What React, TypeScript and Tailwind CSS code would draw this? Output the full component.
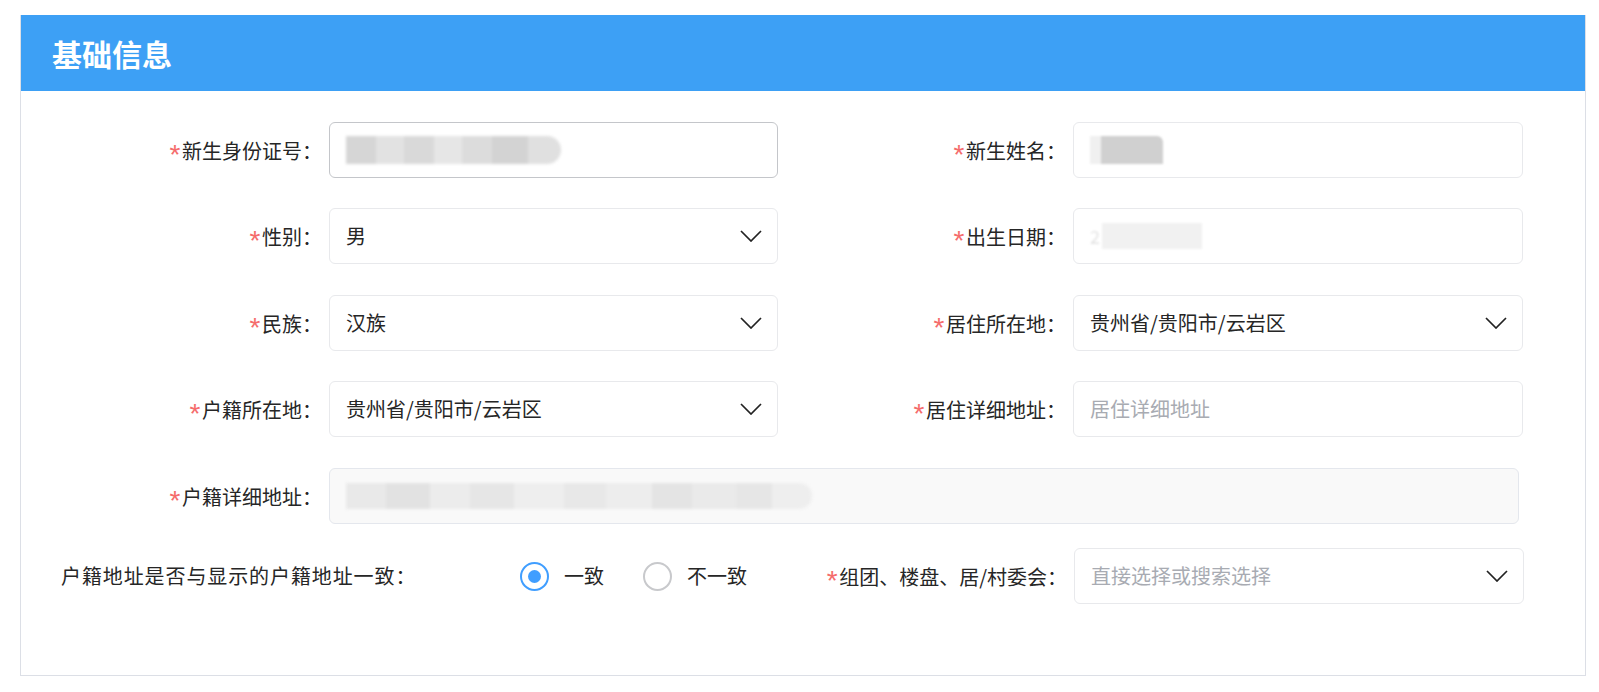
import React from 'react'

const FONT = "font-['Noto_Sans_CJK_SC','Noto_Sans',sans-serif]"

function Chevron() {
  return (
    <svg width="22" height="12" viewBox="0 0 22 12" className="shrink-0">
      <polyline points="1,1 11,11 21,1" fill="none" stroke="#222" strokeWidth="1.7" />
    </svg>
  )
}

function Label({ text, required = true, width }: { text: string; required?: boolean; width: string }) {
  return (
    <div className={`${width} shrink-0 text-right text-[20px] leading-none text-[#262626] whitespace-nowrap`}>
      {required && (
        <span className="inline-block w-[14px] text-center text-[28px] leading-none text-[#f56c6c] relative top-[5px] font-['Liberation_Sans',sans-serif]">*</span>
      )}
      {text}：
    </div>
  )
}

function Box({
  children,
  width = 'w-[449px]',
  tone = 'normal',
  select = false,
}: {
  children?: React.ReactNode
  width?: string
  tone?: 'normal' | 'focus' | 'disabled'
  select?: boolean
}) {
  const border =
    tone === 'focus'
      ? 'border-[#c4c6ca] bg-white'
      : tone === 'disabled'
        ? 'border-[#e4e7ed] bg-[#f9f9f9]'
        : 'border-[#e8e9ec] bg-white'
  return (
    <div
      className={`${width} h-[56px] shrink-0 ml-[7px] rounded-[6px] border ${border} flex items-center pl-[16px] pr-[15px] text-[20px] text-[#262626]`}
    >
      <div className="flex-1 flex items-center min-w-0">{children}</div>
      {select && <Chevron />}
    </div>
  )
}

function Mosaic({ cells, h = 'h-[28px]' }: { cells: string[]; h?: string }) {
  return (
    <div className={`flex ${h} blur-[1.5px] rounded-r-full overflow-hidden`}>
      {cells.map((c, i) => (
        <div key={i} className={c} />
      ))}
    </div>
  )
}

export default function App() {
  return (
    <div className={`w-full h-[692px] bg-white pt-[15px] pl-[20px] pr-[13px] ${FONT}`}>
      <div className="border-x border-b border-[#dcdfe6] h-[661px]">
        <div className="h-[76px] bg-[#3da0f5] flex items-center pl-[31px]">
          <h1 className="text-white text-[30px] font-bold leading-none">基础信息</h1>
        </div>

        <div className="pt-[31px] flex flex-col">
          {/* row 1 */}
          <div className="flex items-center">
            <Label text="新生身份证号" width="w-[301px]" />
            <Box tone="focus">
              <Mosaic
                cells={[
                  'w-[30px] bg-[#d6d6d6]',
                  'w-[28px] bg-[#e2e2e2]',
                  'w-[30px] bg-[#d9d9d9]',
                  'w-[28px] bg-[#e6e6e6]',
                  'w-[30px] bg-[#dcdcdc]',
                  'w-[36px] bg-[#d3d3d3]',
                  'w-[33px] bg-[#e0e0e0]',
                ]}
              />
            </Box>
            <Label text="新生姓名" width="w-[288px]" />
            <Box width="w-[450px]">
              <div className="flex h-[28px] blur-[1px]">
                <div className="w-[11px] bg-[#f0f0f0]" />
                <div className="w-[62px] bg-[#d0d0d0] rounded-tr-[6px]" />
              </div>
            </Box>
          </div>

          {/* row 2 */}
          <div className="flex items-center mt-[30px]">
            <Label text="性别" width="w-[301px]" />
            <Box select>男</Box>
            <Label text="出生日期" width="w-[288px]" />
            <Box width="w-[450px]">
              <div className="flex items-center h-[28px] blur-[1px]">
                <span className="text-[#e3e3e3] text-[18px] mr-[2px]">2</span>
                <div className="w-[100px] h-[26px] bg-[#f1f1f1]" />
              </div>
            </Box>
          </div>

          {/* row 3 */}
          <div className="flex items-center mt-[31px]">
            <Label text="民族" width="w-[301px]" />
            <Box select>汉族</Box>
            <Label text="居住所在地" width="w-[288px]" />
            <Box width="w-[450px]" select>
              贵州省/贵阳市/云岩区
            </Box>
          </div>

          {/* row 4 */}
          <div className="flex items-center mt-[30px]">
            <Label text="户籍所在地" width="w-[301px]" />
            <Box select>贵州省/贵阳市/云岩区</Box>
            <Label text="居住详细地址" width="w-[288px]" />
            <Box width="w-[450px]">
              <span className="text-[#a8abb2]">居住详细地址</span>
            </Box>
          </div>

          {/* row 5 */}
          <div className="flex items-center mt-[31px]">
            <Label text="户籍详细地址" width="w-[301px]" />
            <Box width="w-[1190px]" tone="disabled">
              <Mosaic
                h="h-[26px]"
                cells={[
                  'w-[40px] bg-[#e9e9e9]',
                  'w-[44px] bg-[#e2e2e2]',
                  'w-[40px] bg-[#ececec]',
                  'w-[44px] bg-[#e6e6e6]',
                  'w-[50px] bg-[#eeeeee]',
                  'w-[42px] bg-[#e8e8e8]',
                  'w-[46px] bg-[#ededed]',
                  'w-[40px] bg-[#e4e4e4]',
                  'w-[44px] bg-[#eaeaea]',
                  'w-[36px] bg-[#e6e6e6]',
                  'w-[40px] bg-[#eeeeee]',
                ]}
              />
            </Box>
          </div>

          {/* row 6 */}
          <div className="flex items-center mt-[24px]">
            <div className="w-[758px] shrink-0 flex items-center">
              <div className="pl-[40px] w-[499px] text-[20px] tracking-[0.9px] text-[#262626] whitespace-nowrap leading-none">
                户籍地址是否与显示的户籍地址一致：
              </div>
              <label className="flex items-center">
                <span className="w-[29px] h-[29px] rounded-full border-2 border-[#409eff] flex items-center justify-center">
                  <span className="w-[13px] h-[13px] rounded-full bg-[#409eff]" />
                </span>
                <span className="ml-[15px] text-[20px] text-[#262626] leading-none">一致</span>
              </label>
              <label className="flex items-center ml-[39px]">
                <span className="w-[29px] h-[29px] rounded-full border-2 border-[#c8c9cc]" />
                <span className="ml-[15px] text-[20px] text-[#262626] leading-none">不一致</span>
              </label>
            </div>
            <Label text="组团、楼盘、居/村委会" width="w-[288px]" />
            <Box width="w-[450px]" select>
              <span className="text-[#a8abb2]">直接选择或搜索选择</span>
            </Box>
          </div>
        </div>
      </div>
    </div>
  )
}
